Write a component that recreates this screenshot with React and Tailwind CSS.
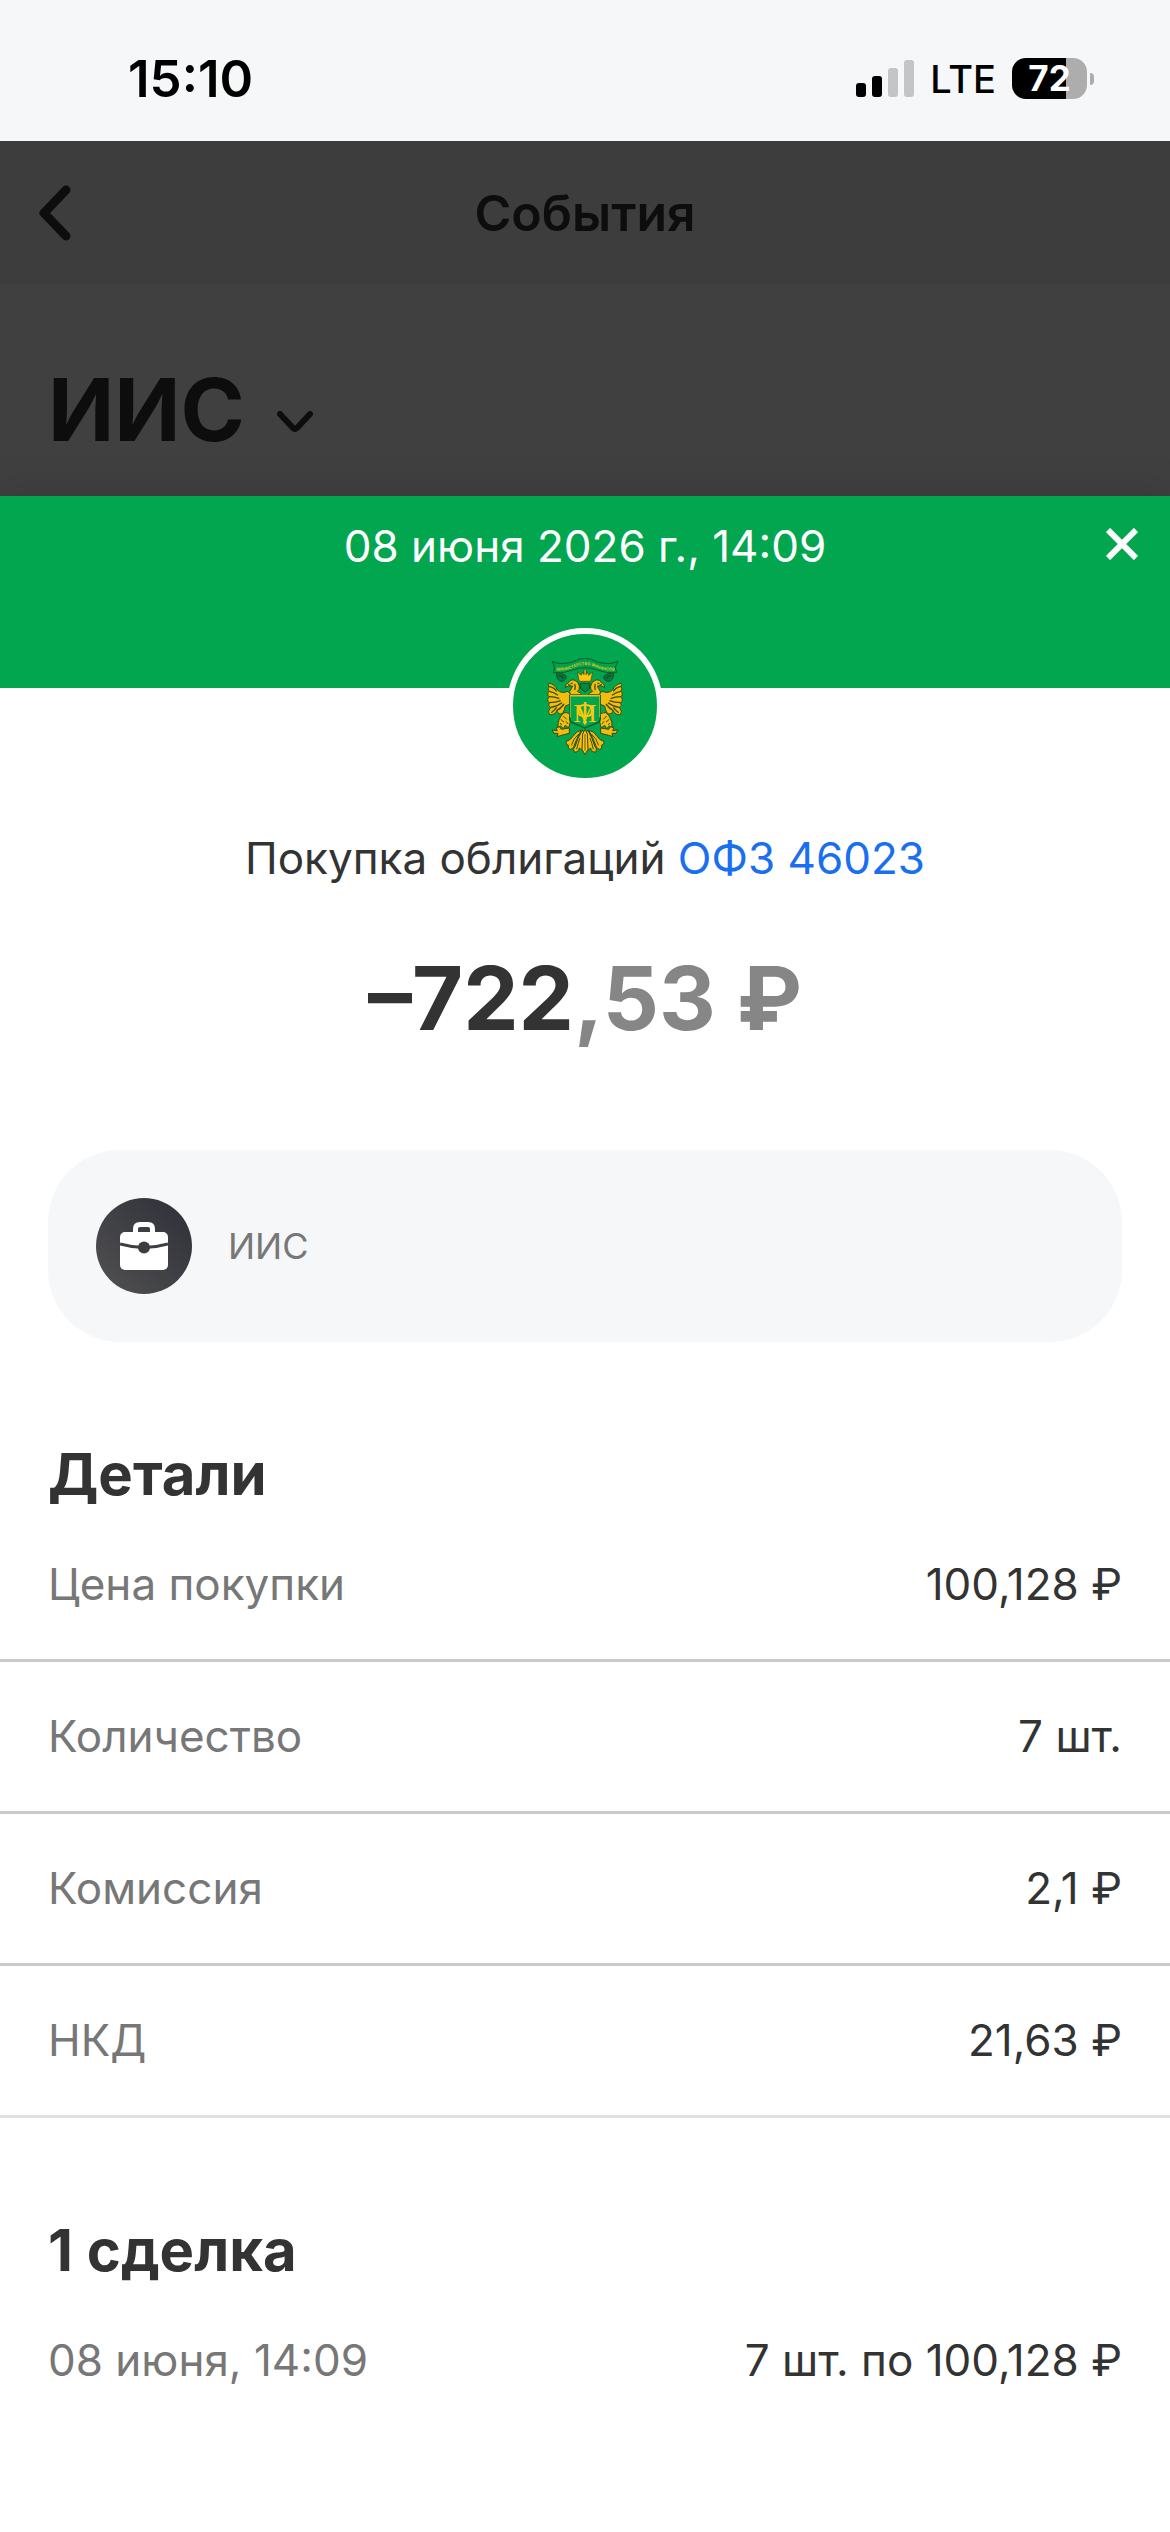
const DETAILS = [
  { label: 'Цена покупки', value: '100,128 ₽' },
  { label: 'Количество', value: '7 шт.' },
  { label: 'Комиссия', value: '2,1 ₽' },
  { label: 'НКД', value: '21,63 ₽' },
];

const DEALS = [{ date: '08 июня, 14:09', value: '7 шт. по 100,128 ₽' }];

function StatusBar() {
  return (
    <div className="flex h-[141px] items-center justify-between bg-[#f5f7f9] pt-4 pr-[76px] pl-32 text-black">
      <span className="text-[51px] leading-[60px] font-semibold">15:10</span>
      <div className="flex items-center gap-4">
        <svg width="58" height="38" viewBox="0 0 58 38" aria-hidden="true">
          <rect x="0" y="23" width="10" height="14" rx="3" fill="#000" />
          <rect x="16" y="16" width="10" height="21" rx="3" fill="#000" />
          <rect x="32" y="8" width="10" height="29" rx="3" fill="#c4c5c7" />
          <rect x="48" y="0" width="10" height="37" rx="3" fill="#c4c5c7" />
        </svg>
        <span className="text-[38px] leading-[48px] font-medium">LTE</span>
        <div className="flex items-center gap-[3px]">
          <div className="flex h-[41px] w-[75px] items-center justify-center rounded-[14px] bg-linear-to-r from-black from-72% to-[#adadad] to-72% text-[35px] leading-[41px] font-bold text-white">
            72
          </div>
          <div className="h-3 w-1 rounded-r-full bg-[#adadad]" />
        </div>
      </div>
    </div>
  );
}

function PageHeader() {
  return (
    <header className="bg-[#404040] text-[#0d0d0d]">
      <div className="grid h-[143px] grid-cols-[1fr_auto_1fr] items-center bg-[#3d3d3d] px-9">
        <button type="button" aria-label="Назад" className="justify-self-start">
          <svg width="37" height="60" viewBox="0 0 37 60" fill="none" aria-hidden="true">
            <path d="M30 7 L8 30 L30 53" stroke="currentColor" strokeWidth="9" strokeLinecap="round" strokeLinejoin="round" />
          </svg>
        </button>
        <h1 className="text-[50px] leading-[60px] font-semibold">События</h1>
      </div>
      <div className="flex h-[212px] items-center px-12 pt-10">
        <button type="button" className="flex items-center gap-8 text-[87px] leading-[104px] font-bold">
          ИИС
          <svg className="mt-6" width="36" height="22" viewBox="0 0 36 22" fill="none" aria-hidden="true">
            <path d="M3 3 L16 17 Q18 19 20 17 L33 3" stroke="currentColor" strokeWidth="6" strokeLinecap="round" strokeLinejoin="round" />
          </svg>
        </button>
      </div>
    </header>
  );
}

// left half of the eagle, mirrored for the right one
function EagleHalf() {
  return (
    <g stroke="#3b4a12" strokeWidth="3" strokeLinejoin="round">
      {/* banner tail */}
      <path d="M50 55 Q66 58 78 66 Q80 80 66 82 Q48 82 50 55 Z" fill="#0b7a3c" stroke="#0a4d28" />
      <path d="M56 66 Q66 64 70 74" fill="none" stroke="#0a4d28" strokeWidth="4" />
      {/* wing */}
      <path d="M84 112 Q64 120 52 108 Q44 90 26 88 Q22 92 28 98 Q20 104 28 112 Q18 120 28 128 Q18 138 28 146 Q22 156 32 160 Q22 172 28 182 Q44 184 50 170 Q56 184 68 178 Q74 168 76 156 L92 150 V122 Z" fill="#f2bd0c" />
      <path d="M28 98 Q42 100 50 112 M28 112 Q42 114 54 124 M28 128 Q44 128 58 134 M28 146 Q46 146 62 140 M32 160 Q50 158 66 146 M50 170 Q62 164 72 150 M34 176 Q44 168 50 160" fill="none" strokeWidth="4" />
      {/* neck and head */}
      <path d="M92 122 Q84 114 94 104 L98 96 L86 96 L76 100 Q76 88 86 86 Q90 76 102 78 Q116 82 118 96 Q120 108 112 112 Q122 116 126 122 Z" fill="#f2bd0c" />
      <path d="M92 88 H98 M104 90 Q108 100 104 108 M84 92 L92 94" fill="none" strokeWidth="4" />
      {/* leg and claw */}
      <path d="M72 176 Q88 174 92 188 Q92 206 86 222 L76 214 L70 224 L62 216 L54 220 Q52 194 72 176 Z" fill="#f2bd0c" />
      <path d="M62 196 L72 204 M70 186 L80 196 M60 208 L66 212 M78 202 L84 210" fill="none" strokeWidth="3" />
      <path d="M88 222 L64 226 L58 218 L48 222 L52 230 L36 228 L42 238 L54 238 L52 248 L64 244 L88 238 Z" fill="#f2bd0c" />
      {/* tail feathers */}
      <path d="M124 228 Q108 232 98 248 Q90 260 78 262 Q76 272 86 274 Q82 284 92 286 Q102 284 104 270 Q112 250 124 228 Z" fill="#f2bd0c" />
      <path d="M126 230 Q112 254 106 276 Q98 284 102 294 Q116 296 118 282 Q124 290 128 284 L132 232 Z" fill="#f2bd0c" />
      <path d="M116 240 Q100 254 94 274 M120 252 Q114 268 110 286" fill="none" strokeWidth="3" />
    </g>
  );
}

function Emblem() {
  return (
    <svg width="90" height="105" viewBox="0 0 270 315" aria-hidden="true">
      <EagleHalf />
      <g transform="translate(270 0) scale(-1 1)">
        <EagleHalf />
      </g>
      <path d="M36 22 Q60 34 98 24 Q135 2 172 24 Q210 34 234 22 L226 40 L230 56 Q200 60 172 48 Q135 34 98 48 Q70 60 40 56 L44 40 Z" fill="#05a04c" stroke="#0a5a2e" strokeWidth="3" />
      <path id="bannerLine" d="M52 50 Q80 50 98 42 Q135 24 172 42 Q190 50 220 50" fill="none" />
      <text fontSize="12" fontWeight="700" fill="#d6cc18" textAnchor="middle">
        <textPath href="#bannerLine" startOffset="50%">МИНИСТЕРСТВО ФИНАНСОВ</textPath>
      </text>
      <path d="M118 82 L112 54 L124 64 L128 54 L132 62 V46 H138 V62 L142 54 L146 64 L158 54 L152 82 Z" fill="#ffc60a" stroke="#3b4a12" strokeWidth="2" />
      <path d="M120 88 H150 L148 104 L135 114 L122 104 Z" fill="#07883f" stroke="#0a4d28" strokeWidth="3" />
      <path d="M89 124 H181 V194 Q181 204 168 208 L135 222 L102 208 Q89 204 89 194 Z" fill="#01a64f" stroke="#0a5a2e" strokeWidth="4" />
      <path d="M90 125 H180" stroke="#d9c81a" strokeWidth="5" />
      <path d="M91 125 V190 M179 125 V190" stroke="#b9b81f" strokeWidth="3" />
      <g fill="#ffc60a" textAnchor="middle">
        <text x="135" y="203" fontSize="78" className="font-['Liberation_Serif',serif]">М</text>
        <text x="135" y="197" fontSize="76" className="font-['Liberation_Sans',sans-serif]">Ф</text>
      </g>
      <path d="M135 196 L128 204 L135 214 L142 204 Z" fill="#ffc60a" />
      <path d="M135 226 L128 240 L126 286 L135 302 L144 286 L142 240 Z" fill="#ffc60a" stroke="#3b4a12" strokeWidth="3" />
      <path d="M135 240 V290" stroke="#6b5a10" strokeWidth="3" />
    </svg>
  );
}

function BriefcaseIcon() {
  return (
    <svg width="48" height="48" viewBox="0 0 48 48" fill="none" aria-hidden="true">
      <path d="M15.5 12 V7 Q15.5 2.5 20 2.5 H28 Q32.5 2.5 32.5 7 V12" stroke="#fff" strokeWidth="5" />
      <rect y="10" width="48" height="38" rx="5" fill="#fff" />
      <path d="M0 22 Q24 29 48 22" stroke="#3d3d42" strokeWidth="3" />
      <circle cx="24" cy="25.5" r="6" fill="#3d3d42" />
    </svg>
  );
}

function Row({ label, value }) {
  return (
    <div className="flex items-center justify-between px-12">
      <dt className="text-[#777777]">{label}</dt>
      <dd className="text-[#333333]">{value}</dd>
    </div>
  );
}

export default function App() {
  return (
    <div className="flex min-h-screen flex-col bg-white font-['Inter','Liberation_Sans',sans-serif] text-[#333333]">
      <StatusBar />
      <PageHeader />

      <main className="flex-1 text-[44px] leading-[60px] shadow-[0_-4px_40px_rgba(0,0,0,0.12)]">
        <div className="grid h-48 grid-cols-[1fr_auto_1fr] items-start bg-[#01a64f] px-8 pt-5 text-white">
          <p className="col-start-2">08 июня 2026 г., 14:09</p>
          <button type="button" aria-label="Закрыть" className="flex h-[56px] items-center justify-self-end">
            <svg width="32" height="32" viewBox="0 0 32 32" aria-hidden="true">
              <path d="M2 2 L30 30 M30 2 L2 30" stroke="currentColor" strokeWidth="6" />
            </svg>
          </button>
        </div>

        <div className="relative mx-auto -mt-[60px] flex size-[156px] items-center justify-center rounded-full border-[6px] border-white bg-[#01a64f]">
          <Emblem />
        </div>

        <p className="mt-11 text-center">
          Покупка облигаций <a href="#ofz-46023" className="text-[#1a6ff0]">ОФЗ 46023</a>
        </p>
        <p className="mt-[58px] text-center text-[88px] leading-[104px] font-bold">
          –722<span className="text-[#868686]">,53 ₽</span>
        </p>

        <div className="mx-12 mt-25 flex h-48 items-center gap-9 rounded-[72px] bg-[#f5f7f9] px-12">
          <div className="flex size-24 items-center justify-center rounded-full bg-linear-to-tr from-[#525252] to-[#2e2f38]">
            <BriefcaseIcon />
          </div>
          <span className="text-[36px] leading-[48px] text-[#777777]">ИИС</span>
        </div>

        <section className="mt-24">
          <h2 className="px-12 text-[58px] leading-[72px] font-bold">Детали</h2>
          <dl className="mt-11">
            {DETAILS.map((item) => (
              <div key={item.label} className="border-b-[3px] border-[#c9cacb] pt-[44px] pb-[45px] first:pt-0 last:border-[#e0e0e0]">
                <Row label={item.label} value={item.value} />
              </div>
            ))}
          </dl>
        </section>

        <section className="mt-24 pb-24">
          <h2 className="px-12 text-[58px] leading-[72px] font-bold">{DEALS.length} сделка</h2>
          <dl className="mt-11">
            {DEALS.map((deal) => (
              <Row key={deal.date} label={deal.date} value={deal.value} />
            ))}
          </dl>
        </section>
      </main>
    </div>
  );
}
